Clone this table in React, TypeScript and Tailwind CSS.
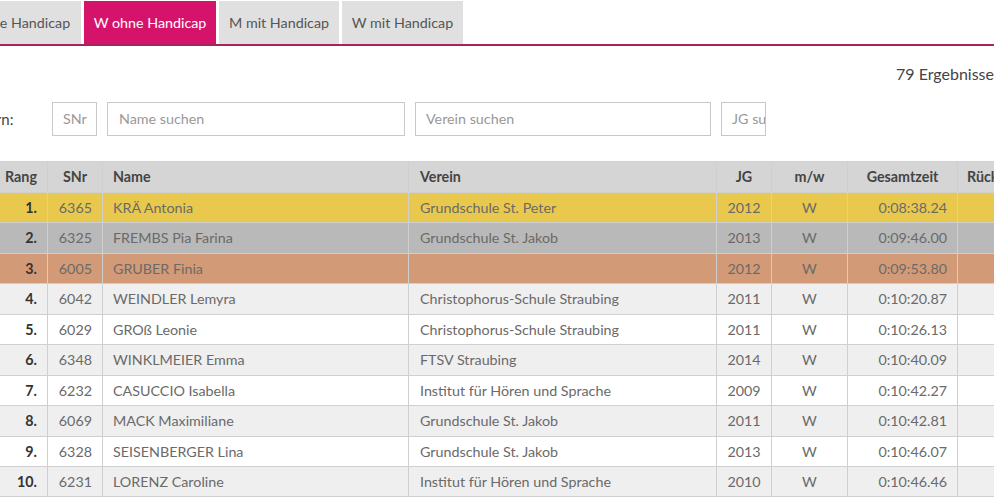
import React from "react";

const rows = [
  { r: "1.", s: "6365", n: "KRÄ Antonia", v: "Grundschule St. Peter", j: "2012", m: "W", t: "0:08:38.24", bg: "bg-[#e9c84e]" },
  { r: "2.", s: "6325", n: "FREMBS Pia Farina", v: "Grundschule St. Jakob", j: "2013", m: "W", t: "0:09:46.00", bg: "bg-[#b9b9b9]" },
  { r: "3.", s: "6005", n: "GRUBER Finia", v: "", j: "2012", m: "W", t: "0:09:53.80", bg: "bg-[#d39a77]" },
  { r: "4.", s: "6042", n: "WEINDLER Lemyra", v: "Christophorus-Schule Straubing", j: "2011", m: "W", t: "0:10:20.87", bg: "bg-[#efefef]" },
  { r: "5.", s: "6029", n: "GROß Leonie", v: "Christophorus-Schule Straubing", j: "2011", m: "W", t: "0:10:26.13", bg: "bg-white" },
  { r: "6.", s: "6348", n: "WINKLMEIER Emma", v: "FTSV Straubing", j: "2014", m: "W", t: "0:10:40.09", bg: "bg-[#efefef]" },
  { r: "7.", s: "6232", n: "CASUCCIO Isabella", v: "Institut für Hören und Sprache", j: "2009", m: "W", t: "0:10:42.27", bg: "bg-white" },
  { r: "8.", s: "6069", n: "MACK Maximiliane", v: "Grundschule St. Jakob", j: "2011", m: "W", t: "0:10:42.81", bg: "bg-[#efefef]" },
  { r: "9.", s: "6328", n: "SEISENBERGER Lina", v: "Grundschule St. Jakob", j: "2013", m: "W", t: "0:10:46.07", bg: "bg-white" },
  { r: "10.", s: "6231", n: "LORENZ Caroline", v: "Institut für Hören und Sprache", j: "2010", m: "W", t: "0:10:46.46", bg: "bg-[#efefef]" },
];

const td = "border border-[#cfcfcf] h-[30.45px] py-0";

export default function App() {
  return (
    <div className="w-[994px] h-[497px] overflow-hidden bg-white text-[#6a6a6a] text-[14.3px]" style={{ fontFamily: "Lato, 'Open Sans', sans-serif" }}>
      {/* Tabs */}
      <div className="pt-[1px] border-b-2 border-[#a8245f] w-[1100px]">
        <div className="flex gap-[3px] -ml-[52px] items-end">
          <div className="w-[133px] h-[43px] bg-[#e0e0e0] flex items-center justify-center text-[#555]">M ohne Handicap</div>
          <div className="w-[132px] h-[43px] bg-[#d6136b] flex items-center justify-center text-white">W ohne Handicap</div>
          <div className="w-[120px] h-[43px] bg-[#e0e0e0] flex items-center justify-center text-[#555]">M mit Handicap</div>
          <div className="w-[121px] h-[43px] bg-[#e0e0e0] flex items-center justify-center text-[#555]">W mit Handicap</div>
        </div>
      </div>

      {/* Results count */}
      <div className="pl-[896px] pt-[16px] h-[56px] whitespace-nowrap text-[16px] text-[#444]">79 Ergebnisse</div>

      {/* Filter row */}
      <div className="flex items-center h-[34px] -ml-[33px] w-[1100px]">
        <span className="w-[85px] text-[15px] text-[#444]">Filtern:</span>
        <div className="w-[45px] h-[34px] border border-[#c8c8c8] flex items-center pl-[10px] text-[#999] overflow-hidden whitespace-nowrap">SNr</div>
        <div className="ml-[10px] w-[298px] h-[34px] border border-[#c8c8c8] flex items-center pl-[11px] text-[#999]">Name suchen</div>
        <div className="ml-[10px] w-[296px] h-[34px] border border-[#c8c8c8] flex items-center pl-[10px] text-[#999]">Verein suchen</div>
        <div className="ml-[10px] w-[45px] h-[34px] border border-[#c8c8c8] flex items-center pl-[10px] text-[#999] overflow-hidden whitespace-nowrap">JG suchen</div>
      </div>

      {/* Table */}
      <table className="mt-[25px] -ml-[6px] border-collapse table-fixed w-[1100px]">
        <colgroup>
          <col className="w-[53px]" />
          <col className="w-[55px]" />
          <col className="w-[306px]" />
          <col className="w-[308px]" />
          <col className="w-[55px]" />
          <col className="w-[76px]" />
          <col className="w-[110px]" />
          <col className="w-[137px]" />
        </colgroup>
        <thead>
          <tr className="bg-[#d5d5d5] text-[#444] font-bold">
            <th className={`${td} !h-[31px] text-center`}>Rang</th>
            <th className={`${td} !h-[31px] text-center`}>SNr</th>
            <th className={`${td} !h-[31px] text-left pl-[10px]`}>Name</th>
            <th className={`${td} !h-[31px] text-left pl-[11px]`}>Verein</th>
            <th className={`${td} !h-[31px] text-center`}>JG</th>
            <th className={`${td} !h-[31px] text-center`}>m/w</th>
            <th className={`${td} !h-[31px] text-center`}>Gesamtzeit</th>
            <th className={`${td} !h-[31px] text-left pl-[9px]`}>Rückstand</th>
          </tr>
        </thead>
        <tbody>
          {rows.map((x) => (
            <tr key={x.r} className={x.bg}>
              <td className={`${td} text-right pr-[10px] font-bold text-[#333]`}>{x.r}</td>
              <td className={`${td} text-right pr-[10px]`}>{x.s}</td>
              <td className={`${td} text-left pl-[10px]`}>{x.n}</td>
              <td className={`${td} text-left pl-[11px]`}>{x.v}</td>
              <td className={`${td} text-center`}>{x.j}</td>
              <td className={`${td} text-center`}>{x.m}</td>
              <td className={`${td} text-right pr-[10px]`}>{x.t}</td>
              <td className={`${td}`}></td>
            </tr>
          ))}
        </tbody>
      </table>
    </div>
  );
}
